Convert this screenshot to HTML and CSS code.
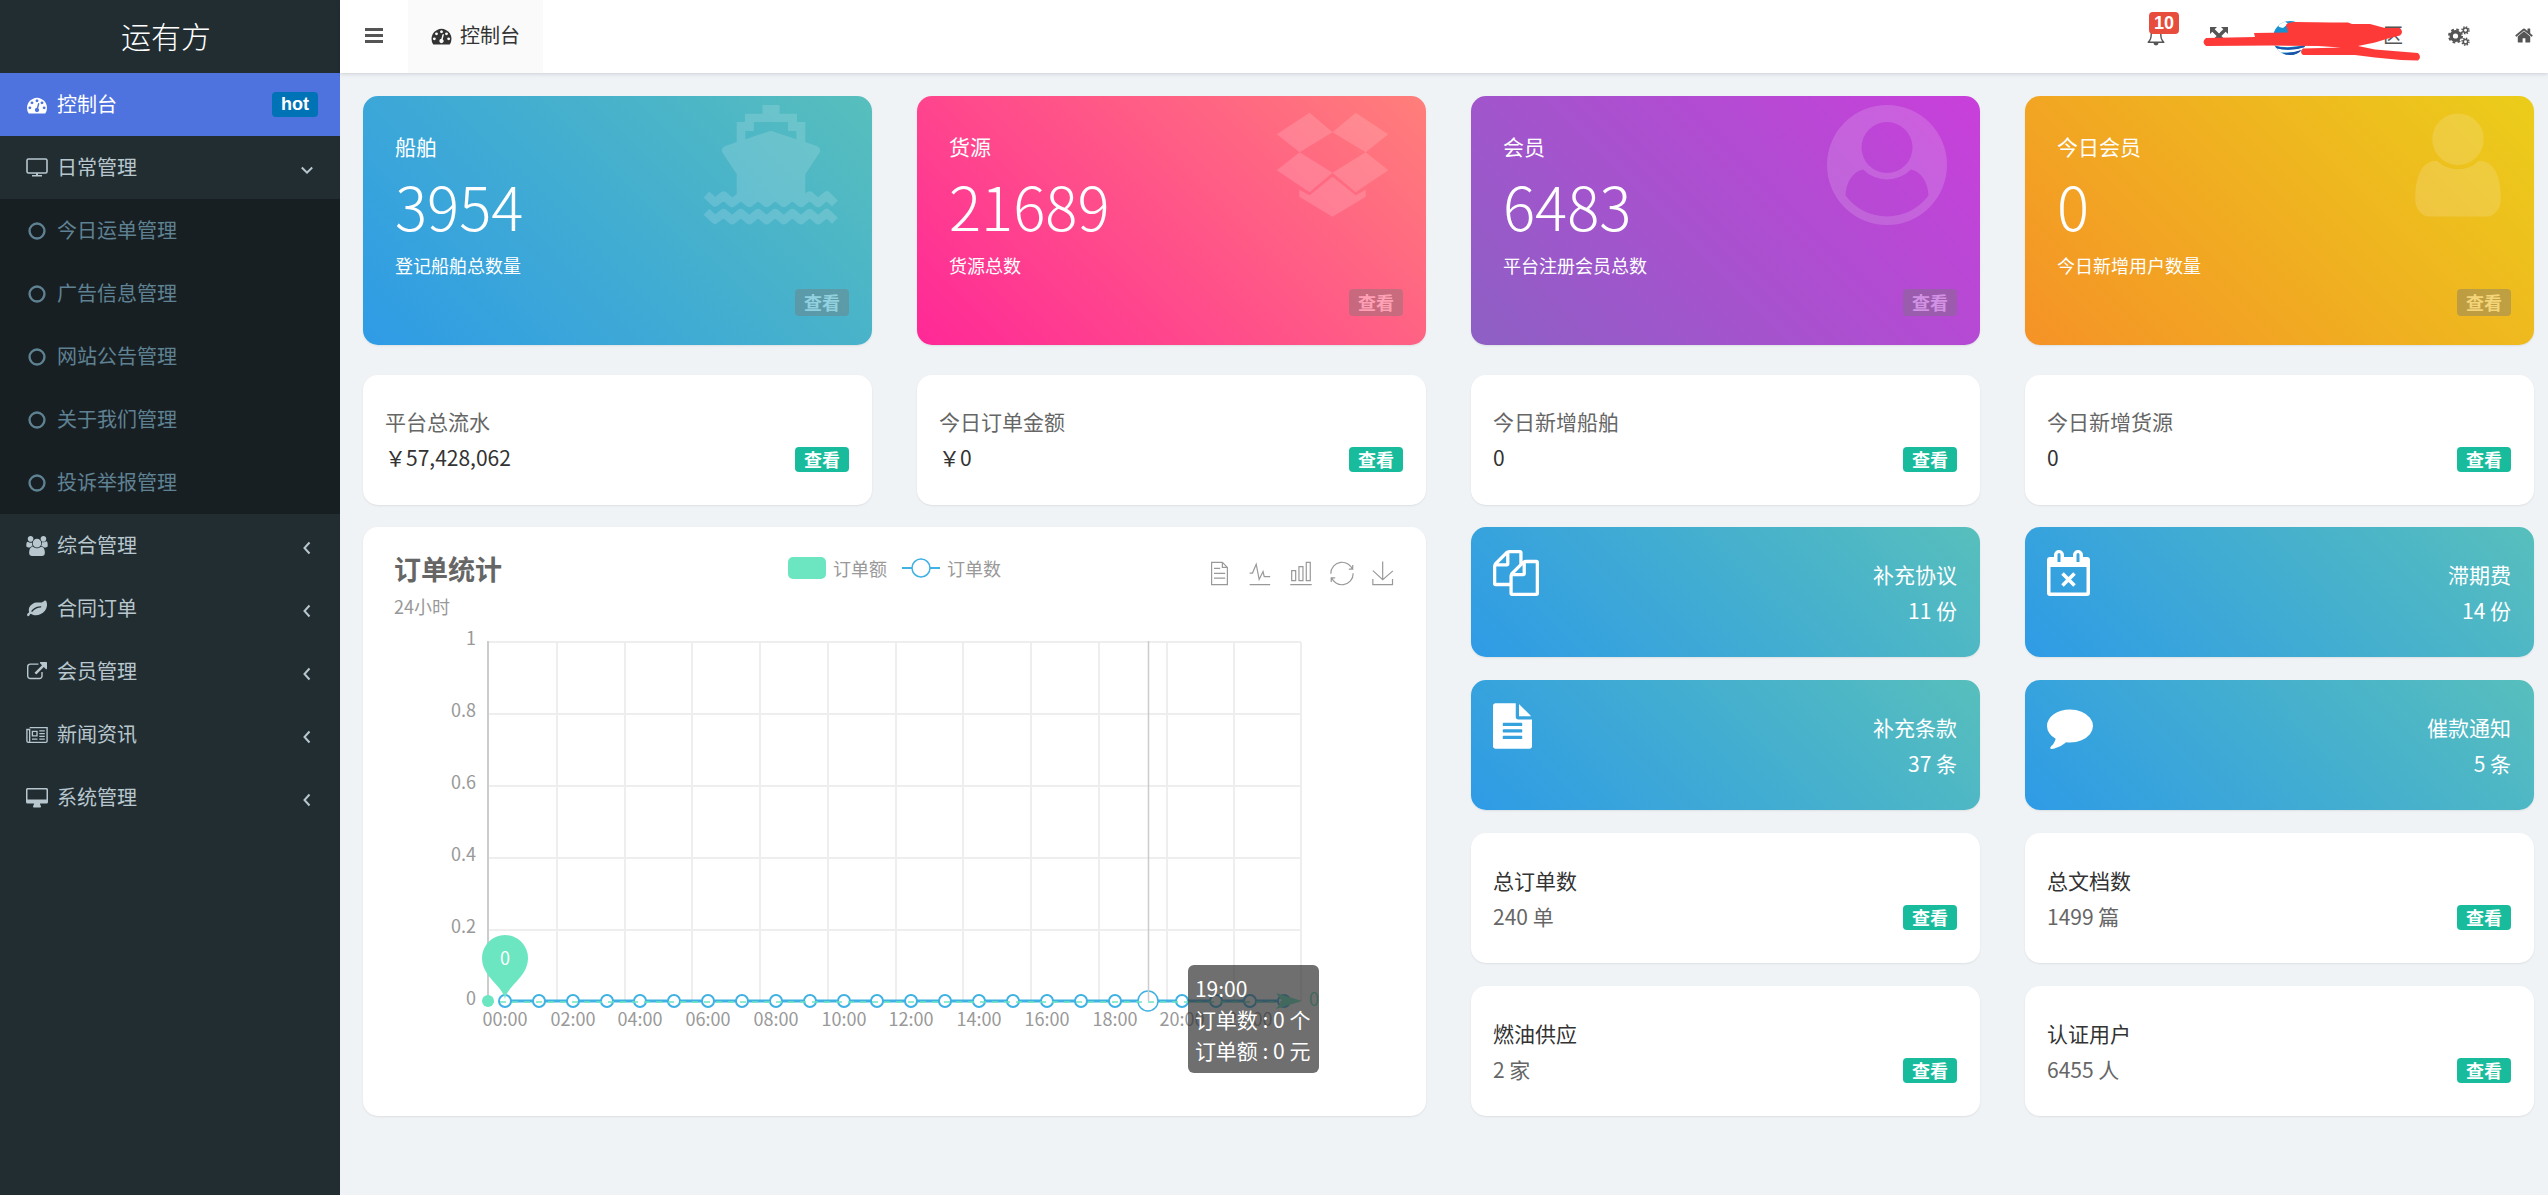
FILE: index.html
```html
<!DOCTYPE html>
<html lang="zh-CN">
<head>
<meta charset="utf-8">
<meta name="viewport" content="width=device-width, initial-scale=1">
<title>运有方</title>
<link rel="stylesheet" href="styles.css">
</head>
<body>
<svg class="sprite" aria-hidden="true">
  <symbol id="i-dashboard" viewBox="0 0 1792 1792"><path d="M384 1152q0-53-37.500-90.500t-90.500-37.500-90.500 37.500-37.500 90.500 37.500 90.500 90.500 37.500 90.500-37.500 37.500-90.500zm192-448q0-53-37.500-90.500t-90.500-37.500-90.500 37.500-37.500 90.500 37.500 90.500 90.500 37.500 90.500-37.500 37.500-90.500zm428 481l101-382q6-26-7.500-48.500t-38.500-29.500-48 6.500-30 39.500l-101 382q-60 5-107 43.500t-63 98.500q-20 77 20 146t117 89 146-20 89-117q16-60-6-117t-72-91zm660-33q0-53-37.500-90.500t-90.500-37.500-90.500 37.500-37.500 90.500 37.500 90.500 90.500 37.500 90.500-37.500 37.500-90.500zm-640-640q0-53-37.500-90.500t-90.500-37.500-90.500 37.500-37.500 90.500 37.500 90.500 90.500 37.500 90.500-37.500 37.500-90.500zm448 192q0-53-37.500-90.500t-90.500-37.500-90.500 37.500-37.500 90.500 37.500 90.500 90.500 37.500 90.500-37.500 37.500-90.500zm320 448q0 261-141 483-19 29-54 29h-1402q-35 0-54-29-141-221-141-483 0-182 71-348t191-286 286-191 348-71 348 71 286 191 191 286 71 348z"/></symbol>
  <symbol id="i-tv" viewBox="0 0 22 20"><path d="M2.500 1h17a1.500 1.500 0 0 1 1.500 1.500v11a1.500 1.500 0 0 1-1.500 1.500h-17a1.500 1.500 0 0 1-1.500-1.500v-11a1.500 1.500 0 0 1 1.500-1.500z" fill="none" stroke="currentColor" stroke-width="1.600"/><path d="M10 15h2v2h4v1.500H6V17h4z"/></symbol>
  <symbol id="i-circle" viewBox="0 0 22 22"><circle cx="11" cy="11" r="8.200" fill="none" stroke="currentColor" stroke-width="2.600"/></symbol>
  <symbol id="i-users" viewBox="0 0 1920 1792"><path d="M593 896q-162 5-265 128h-134q-82 0-138-40.500t-56-118.500q0-353 124-353 6 0 43.500 21t97.500 42.500 119 21.500q67 0 133-23-5 37-5 66 0 159 81 292zm1071 637q0 120-73 189.500t-194 69.500h-874q-121 0-194-69.500t-73-189.500q0-53 3.500-103.500t14-109 26.500-108.500 43-97.500 62-81 85.500-53.500 111.500-20q10 0 43 21.500t73 48 107 48 135 21.500 135-21.500 107-48 73-48 43-21.500q61 0 111.500 20t85.500 53.500 62 81 43 97.500 26.500 108.500 14 109 3.500 103.500zm-1024-1277q0 106-75 181t-181 75-181-75-75-181 75-181 181-75 181 75 75 181zm704 384q0 159-112.500 271.500t-271.500 112.500-271.500-112.500-112.500-271.500 112.500-271.500 271.500-112.500 271.500 112.500 112.500 271.500zm576 225q0 78-56 118.500t-138 40.500h-134q-103-123-265-128 81-133 81-292 0-29-5-66 66 23 133 23 59 0 119-21.500t97.500-42.500 43.500-21q124 0 124 353zm-128-609q0 106-75 181t-181 75-181-75-75-181 75-181 181-75 181 75 75 181z"/></symbol>
  <symbol id="i-leaf" viewBox="0 0 1792 1792"><path d="M1280 704q0-26-19-45t-45-19q-172 0-318 49.500t-259.500 134-235.500 219.500q-19 21-19 45 0 26 19 45t45 19q24 0 45-19 27-24 74-71t67-66q137-124 268.500-176t313.500-52q26 0 45-19t19-45zm512-198q0 95-20 193-46 224-184.500 383t-357.500 268q-214 108-438 108-148 0-286-47-15-5-88-42t-96-37q-16 0-39.500 32t-45 70-52.500 70-60 32q-43 0-63.500-17.500t-45.500-59.500q-2-4-6-11t-5.500-10-3-9.500-1.500-13.500q0-35 31-73.500t68-65.500 68-56 31-48q0-4-14-38t-16-44q-9-51-9-104 0-115 43.500-220t119-184.500 170.500-139 204-95.500q55-18 145-25.500t179.500-9 178.500-6 163.500-24 113.500-56.500l29.500-29.500 29.500-28 27-20 36.500-16 43.500-4.500q39 0 70.500 46t47.500 112 24 124 8 96z"/></symbol>
  <symbol id="i-external" viewBox="0 0 1792 1792"><path d="M1408 928v320q0 119-84.500 203.500t-203.500 84.500h-832q-119 0-203.500-84.500t-84.500-203.500v-832q0-119 84.500-203.500t203.500-84.500h704q14 0 23 9t9 23v64q0 14-9 23t-23 9h-704q-66 0-113 47t-47 113v832q0 66 47 113t113 47h832q66 0 113-47t47-113v-320q0-14 9-23t23-9h64q14 0 23 9t9 23zm384-864v512q0 26-19 45t-45 19-45-19l-176-176-652 652q-10 10-23 10t-23-10l-114-114q-10-10-10-23t10-23l652-652-176-176q-19-19-19-45t19-45 45-19h512q26 0 45 19t19 45z"/></symbol>
  <symbol id="i-news" viewBox="0 0 24 18"><path d="M4 1h19v14.500a1.500 1.500 0 0 1-1.500 1.500H2.500A1.500 1.500 0 0 1 1 15.500V3h3v12.500a1.500 1.500 0 0 1-1.500 1.500M7 5h5v5H7zM14.500 4.500h6M14.500 7.500h6M14.500 10.500h6M6.500 13.500h6M14.500 13.500h6" fill="none" stroke="currentColor" stroke-width="1.500"/></symbol>
  <symbol id="i-desktop" viewBox="0 0 22 20"><path fill-rule="evenodd" d="M1.500 0h19A1.500 1.500 0 0 1 22 1.500v12.500a1.500 1.500 0 0 1-1.500 1.500H14c0 1.500 1 2.200 1 3.200 0 .5-.4.8-.8.8H7.800c-.5 0-.8-.3-.8-.8 0-1 1-1.700 1-3.200H1.500A1.500 1.500 0 0 1 0 14V1.500A1.500 1.500 0 0 1 1.500 0zm.4 1.500a.4.400 0 0 0-.4.400V11.600h19V1.900a.4.400 0 0 0-.4-.4z"/></symbol>
  <symbol id="i-left" viewBox="0 0 12 14"><path d="M8.500 1.500L3.500 7l5 5.500" fill="none" stroke="currentColor" stroke-width="2"/></symbol>
  <symbol id="i-down" viewBox="0 0 12 14"><path d="M.8 4.500L6 9.700l5.200-5.200" fill="none" stroke="currentColor" stroke-width="2"/></symbol>
  <symbol id="i-bars" viewBox="0 0 18 15"><path d="M0 0h18v3H0zM0 6h18v3H0zM0 12h18v3H0z"/></symbol>
  <symbol id="i-bell" viewBox="0 0 18 20"><path d="M9 1.200V3M1.200 16.200C3.400 14.300 4.200 12 4.200 8.500 4.200 5.200 6 3 9 3s4.800 2.200 4.800 5.500c0 3.500.8 5.800 3 7.700z" fill="none" stroke="currentColor" stroke-width="1.400" stroke-linejoin="round"/><path d="M6.500 17h5a2.500 2.500 0 0 1-5 0z"/></symbol>
  <symbol id="i-expand" viewBox="0 0 18 18"><path d="M0 0h7L4.700 2.300 9 6.600l4.300-4.300L11 0h7v7l-2.300-2.300L11.400 9l4.300 4.300L18 11v7h-7l2.300-2.300L9 11.400l-4.300 4.300L7 18H0v-7l2.300 2.300L6.600 9 2.300 4.700 0 7z"/></symbol>
  <symbol id="i-cogs" viewBox="0 0 22 20"><g fill="none" stroke="currentColor"><circle cx="7.500" cy="10" r="4.300" stroke-width="3.400"/><circle cx="7.500" cy="10" r="6.500" stroke-width="2" stroke-dasharray="2.700 2.400"/><circle cx="17.500" cy="4.300" r="2.200" stroke-width="1.500"/><circle cx="17.500" cy="4.300" r="3.500" stroke-width="1.400" stroke-dasharray="1.400 1.350"/><circle cx="17.500" cy="15.700" r="2.200" stroke-width="1.500"/><circle cx="17.500" cy="15.700" r="3.500" stroke-width="1.400" stroke-dasharray="1.400 1.350"/></g></symbol>
  <symbol id="i-home" viewBox="64 256 1664 1280"><path d="M1472 992v480q0 26-19 45t-45 19h-384v-384h-256v384h-384q-26 0-45-19t-19-45v-480q0-1 .5-3t.5-3l575-474 575 474q1 2 1 6zm223-69l-62 74q-8 9-21 11h-3q-13 0-21-7l-692-577-692 577q-12 8-24 7-13-2-21-11l-62-74q-8-10-7-23.500t11-21.500l719-599q32-26 76-26t76 26l244 204v-195q0-14 9-23t23-9h192q14 0 23 9t9 23v408l219 182q10 8 11 21.500t-7 23.500z"/></symbol>
  <symbol id="i-files" viewBox="0 0 1792 1792"><path d="M1696 384q40 0 68 28t28 68v1216q0 40-28 68t-68 28h-960q-40 0-68-28t-28-68v-288h-544q-40 0-68-28t-28-68v-672q0-40 20-88t48-76l408-408q28-28 76-48t88-20h416q40 0 68 28t28 68v328q68-40 128-40h416zm-544 213l-299 299h299v-299zm-640-384l-299 299h299v-299zm196 647l316-316v-416h-384v416q0 40-28 68t-68 28h-416v640h512v-256q0-40 20-88t48-76zm956 804v-1152h-384v416q0 40-28 68t-68 28h-416v640h896z"/></symbol>
  <symbol id="i-calendar" viewBox="0 0 43 46"><path fill-rule="evenodd" d="M3 7h4V5a5 5 0 0 1 10 0v2h9V5a5 5 0 0 1 10 0v2h4a3 3 0 0 1 3 3v33a3 3 0 0 1-3 3H3a3 3 0 0 1-3-3V10a3 3 0 0 1 3-3zm.500 10v25.500h36V17zM10.500 4.500v7.500h3V4.500a1.500 1.500 0 0 0-3 0zm19 0v7.500h3V4.500a1.500 1.500 0 0 0-3 0z"/><path d="M15.500 23.500l12 12m0-12l-12 12" stroke="currentColor" stroke-width="3.600"/></symbol>
  <symbol id="i-filetext" viewBox="128 0 1536 1792"><path d="M1596 476q14 14 28 36h-472v-472q22 14 36 28zm-476 164h544v1056q0 40-28 68t-68 28h-1344q-40 0-68-28t-28-68v-1600q0-40 28-68t68-28h800v544q0 40 28 68t68 28zm160 736v-64q0-14-9-23t-23-9h-704q-14 0-23 9t-9 23v64q0 14 9 23t23 9h704q14 0 23-9t9-23zm0-256v-64q0-14-9-23t-23-9h-704q-14 0-23 9t-9 23v64q0 14 9 23t23 9h704q14 0 23-9t9-23zm0-256v-64q0-14-9-23t-23-9h-704q-14 0-23 9t-9 23v64q0 14 9 23t23 9h704q14 0 23-9t9-23z"/></symbol>
  <symbol id="i-comment" viewBox="0 0 1792 1792"><path d="M1792 896q0 174-120 321.500t-326 233-450 85.500q-70 0-145-8-198 175-460 242-49 14-114 22-17 2-30.500-9t-17.500-29v-1q-3-4-.5-12t2-10 4.500-9.500l6-9 7-8.500 8-9q7-8 31-34.500t34.500-38 31-39.500 32.500-51 27-59 26-76q-157-89-247.500-220t-90.500-281q0-130 71-248.500t191-204.500 286-136.500 348-50.500q244 0 450 85.500t326 233 120 321.500z"/></symbol>
</svg>

<div class="app">
  <aside class="sidebar">
    <a class="brand" href="#">运有方</a>
    <nav>
      <ul class="menu">
        <li><a class="item active" href="#"><svg class="ico"><use href="#i-dashboard"/></svg><span class="label">控制台</span><span class="hot">hot</span></a></li>
        <li><a class="item" href="#"><svg class="ico"><use href="#i-tv"/></svg><span class="label">日常管理</span><svg class="arrow"><use href="#i-down"/></svg></a>
          <ul class="submenu">
            <li><a class="item" href="#"><svg class="ico"><use href="#i-circle"/></svg><span class="label">今日运单管理</span></a></li>
            <li><a class="item" href="#"><svg class="ico"><use href="#i-circle"/></svg><span class="label">广告信息管理</span></a></li>
            <li><a class="item" href="#"><svg class="ico"><use href="#i-circle"/></svg><span class="label">网站公告管理</span></a></li>
            <li><a class="item" href="#"><svg class="ico"><use href="#i-circle"/></svg><span class="label">关于我们管理</span></a></li>
            <li><a class="item" href="#"><svg class="ico"><use href="#i-circle"/></svg><span class="label">投诉举报管理</span></a></li>
          </ul>
        </li>
        <li><a class="item" href="#"><svg class="ico"><use href="#i-users"/></svg><span class="label">综合管理</span><svg class="arrow"><use href="#i-left"/></svg></a></li>
        <li><a class="item" href="#"><svg class="ico"><use href="#i-leaf"/></svg><span class="label">合同订单</span><svg class="arrow"><use href="#i-left"/></svg></a></li>
        <li><a class="item" href="#"><svg class="ico"><use href="#i-external"/></svg><span class="label">会员管理</span><svg class="arrow"><use href="#i-left"/></svg></a></li>
        <li><a class="item" href="#"><svg class="ico"><use href="#i-news"/></svg><span class="label">新闻资讯</span><svg class="arrow"><use href="#i-left"/></svg></a></li>
        <li><a class="item" href="#"><svg class="ico"><use href="#i-desktop"/></svg><span class="label">系统管理</span><svg class="arrow"><use href="#i-left"/></svg></a></li>
      </ul>
    </nav>
  </aside>

  <div class="page">
    <header class="topbar">
      <button class="toggle" type="button" aria-label="菜单"><svg><use href="#i-bars"/></svg></button>
      <a class="tab" href="#"><svg><use href="#i-dashboard"/></svg><span class="label">控制台</span></a>
      <div class="tools">
        <a class="bell" href="#" aria-label="通知"><svg class="t-bell"><use href="#i-bell"/></svg><span class="count">10</span></a>
        <a href="#" aria-label="全屏"><svg class="t-expand"><use href="#i-expand"/></svg></a>
        <a class="user" href="#">
          <svg class="avatar" viewBox="0 0 34 34"><defs><clipPath id="av"><circle cx="17" cy="17" r="17"/></clipPath></defs><g clip-path="url(#av)"><path fill="#1590d0" d="M0 0h34v34H0z"/><path fill="#fff" d="M4 2l8-2 3 3-5 4-4-1zM0 20q12 6 34 0v3q-18 6-34 1zM2 27q14 4 30-1v2q-12 5-28 3z"/><path fill="#1d52a6" d="M1 25q14 4 32-1l-1 2q-14 5-30 1zM6 32q12 1 22-3l-3 5H9z"/></g></svg>
          <span class="label">区</span>
          <svg class="scribble" viewBox="0 0 220 42"><path d="M4 18L53 17 52 13 86 12.500 84 5Q86 2 93 2L129 2.500H146L150 4H168L183 8 198 8Q202 12 198 15.500L186 18.500 173 22.500 156 26 173 29.500 216 33Q220 37 216 40.500L199 40 173 37.500 153 35H101Q97 32 101 28.500L139 27.500 116 26 69 25.500 4 26Q-1 22 4 18z"/></svg>
        </a>
        <a href="#" aria-label="设置"><svg class="t-cogs"><use href="#i-cogs"/></svg></a>
        <a href="#" aria-label="主页"><svg class="t-home"><use href="#i-home"/></svg></a>
      </div>
    </header>

    <main class="content">
      <section class="grid stats">
        <article class="card stat blue">
          <div class="stat-text"><h2>船舶</h2><strong>3954</strong><p>登记船舶总数量</p></div>
          <div class="stat-side">
            <svg class="big" width="137" height="120" viewBox="0 0 137 120"><path fill-rule="evenodd" d="M60.400 0h17.200v8.700h17.500V17h8.200v20l12 4.200q4 2 2.500 6L103.300 69.300V92H34.700V69.300L20.200 47.200q-1.500-4 2.500-6l12-4.200V17h8.200V8.700h17.500zM51.900 17v9h-8.600v8.300L69 25.700l25.400 8.600V26H86v-9z"/><path d="M4.500 89.500L13 97.500 21.600 90.500 30.200 98 38.800 91 47.400 98 56 91 64.600 98 73.200 91 81.800 98 90.400 91 99 98 107.600 90.500 116.200 98 124.800 90.500 133 98.500M4.500 106.800L13 114.800 21.600 108 30.200 115.200 38.800 108 47.400 115.200 56 108 64.600 115.200 73.200 108 81.800 115.200 90.400 108 99 115.200 107.600 108 116.200 115.200 124.800 108 133 115.800" fill="none" stroke="#fff" stroke-width="8.400" stroke-linejoin="round"/></svg>
            <a class="btn ghost" href="#">查看</a>
          </div>
        </article>
        <article class="card stat pink">
          <div class="stat-text"><h2>货源</h2><strong>21689</strong><p>货源总数</p></div>
          <div class="stat-side">
            <svg class="big" width="120" height="120" viewBox="0 0 120 120"><path d="M36.600 7.700L3.800 29.300l22.800 18 32.900-20zM82.700 7.700l32.500 21.600-22.500 18-33.200-20zM26.600 47.300l32.900 20.400-22.900 19.600-32.800-22zM92.700 47.300l22.500 18-32.500 22-23.200-19.600zM26.300 84.700l10.300 5.600 22.900-18.600 23.200 18.600 10-5.600v7l-33.200 20-33.200-20z"/></svg>
            <a class="btn ghost" href="#">查看</a>
          </div>
        </article>
        <article class="card stat purple">
          <div class="stat-text"><h2>会员</h2><strong>6483</strong><p>平台注册会员总数</p></div>
          <div class="stat-side">
            <svg class="big" width="120" height="120" viewBox="0 0 120 120"><path fill-rule="evenodd" d="M60 0a60 60 0 1 1 0 120A60 60 0 0 1 60 0zm0 17a25.500 25.500 0 1 0 0 51 25.500 25.500 0 0 0 0-51zM36 64.500C25 67 19 78 18.500 90.500a51.500 51.500 0 0 0 83 0C101 78 95 67 84 64.500a34 34 0 0 1-48 0z"/></svg>
            <a class="btn ghost" href="#">查看</a>
          </div>
        </article>
        <article class="card stat yellow">
          <div class="stat-text"><h2>今日会员</h2><strong>0</strong><p>今日新增用户数量</p></div>
          <div class="stat-side">
            <svg class="big" width="86" height="120" viewBox="256 0 1280 1792"><path d="M1536 1399q0 109-62.500 187t-150.500 78h-854q-88 0-150.500-78t-62.500-187q0-85 8.500-160.500t31.500-152 58.500-131 94-89 134.500-34.500q131 128 313 128t313-128q76 0 134.500 34.500t94 89 58.500 131 31.500 152 8.500 160.500zm-256-887q0 159-112.500 271.500t-271.500 112.500-271.500-112.500-112.500-271.500 112.500-271.500 271.500-112.500 271.500 112.500 112.500 271.500z"/></svg>
            <a class="btn ghost" href="#">查看</a>
          </div>
        </article>
      </section>

      <section class="grid totals">
        <article class="card info light"><div><h3>平台总流水</h3><p>￥57,428,062</p></div><a class="btn" href="#">查看</a></article>
        <article class="card info light"><div><h3>今日订单金额</h3><p>￥0</p></div><a class="btn" href="#">查看</a></article>
        <article class="card info light"><div><h3>今日新增船舶</h3><p>0</p></div><a class="btn" href="#">查看</a></article>
        <article class="card info light"><div><h3>今日新增货源</h3><p>0</p></div><a class="btn" href="#">查看</a></article>
      </section>

      <section class="grid lower">
        <article class="card chart">
          <div class="chart-head">
            <div class="chart-title"><h2>订单统计</h2><p>24小时</p></div>
            <ul class="legend">
              <li><span class="swatch"></span>订单额</li>
              <li><svg width="38" height="20" viewBox="0 0 38 20"><path d="M0 10h38" stroke="#3fb1e3" stroke-width="2"/><circle cx="19" cy="10" r="9" fill="#fff" stroke="#3fb1e3" stroke-width="1.500"/></svg>订单数</li>
            </ul>
            <div class="toolbox">
              <button type="button" aria-label="数据视图"><svg viewBox="0 0 60 60"><path d="M17.500 17.300H33M45.400 29.500h-28M11.500 2v56H51V14.800L38.400 2H11.500zM38.400 2.200v12.700H51M45.400 41.700h-28"/></svg></button>
              <button type="button" aria-label="折线图"><svg viewBox="0 0 60 60"><path d="M4.100 28.900h7.100l9.300-22 7.400 38 9.700-19.700 3 12.800h14.900M4.100 58h51.400"/></svg></button>
              <button type="button" aria-label="柱状图"><svg viewBox="0 0 60 60"><path d="M6.700 22.900h10V48h-10zM24.900 13h10v35h-10zM43.200 2h10v46h-10zM3.100 58h53.700"/></svg></button>
              <button type="button" aria-label="还原"><svg viewBox="0 0 60 60"><path d="M47 18.900h9.800V8.700M56.300 20.100C52.100 9 40.500.6 26.800 2.100 12.600 3.700 1.600 16.200 2.100 30.600M13 41.100H3.100v10.200M3.700 39.900c4.200 11.100 15.800 19.500 29.500 18 14.200-1.600 25.200-14.100 24.700-28.500"/></svg></button>
              <button type="button" aria-label="保存"><svg viewBox="0 0 60 60"><path d="M4.700 22.900l24.600 22.600 25.400-22.100M4.600 43.600V58h49.200V43.600M29.200 45.100V0"/></svg></button>
            </div>
          </div>
          <div class="plot">
            <svg viewBox="0 0 1063 460" role="img" aria-label="订单统计">
              <defs>
                <marker id="dot" markerUnits="userSpaceOnUse" markerWidth="16" markerHeight="16" refX="8" refY="8"><circle cx="8" cy="8" r="6" fill="#fff" stroke="#3fb1e3" stroke-width="2"/></marker>
              </defs>
              <path stroke="#eee" stroke-width="2" fill="none" d="M125 22h813M125 94h813M125 166h813M125 238h813M125 310h813M194 22v359M262 22v359M329 22v359M397 22v359M465 22v359M533 22v359M600 22v359M668 22v359M736 22v359M804 22v359M871 22v359M938 22v359"/>
              <path stroke="#ccc" stroke-width="2" fill="none" d="M125 21v360"/>
              <g class="axis" text-anchor="end"><text x="113" y="25">1</text><text x="113" y="97">0.8</text><text x="113" y="169">0.6</text><text x="113" y="241">0.4</text><text x="113" y="313">0.2</text><text x="113" y="385">0</text></g>
              <g class="axis" text-anchor="middle"><text x="142" y="406">00:00</text><text x="210" y="406">02:00</text><text x="277" y="406">04:00</text><text x="345" y="406">06:00</text><text x="413" y="406">08:00</text><text x="481" y="406">10:00</text><text x="548" y="406">12:00</text><text x="616" y="406">14:00</text><text x="684" y="406">16:00</text><text x="752" y="406">18:00</text><text x="819" y="406">20:00</text><text x="887" y="406">22:00</text></g>
              <path fill="none" stroke="#3fb1e3" stroke-width="3" marker-start="url(#dot)" marker-mid="url(#dot)" marker-end="url(#dot)" d="M142 381L176 381 210 381 244 381 277 381 311 381 345 381 379 381 413 381 447 381 481 381 514 381 548 381 582 381 616 381 650 381 684 381 718 381 752 381 785 381 819 381 853 381 887 381 921 381"/>
              <circle cx="785" cy="381" r="10" fill="#fff" stroke="#3fb1e3" stroke-width="1.500"/>
              <path d="M785.500 21v360" stroke="#ccc" stroke-width="1.500"/>
              <path d="M125 382h800" stroke="#6be6c1" stroke-width="1.500" stroke-dasharray="6 6"/>
              <circle cx="125" cy="381" r="6" fill="#6be6c1"/>
              <path fill="#6be6c1" d="M939 381l-26-8 6 8-6 8z"/>
              <text class="mark" x="946" y="386">0</text>
              <path fill="#6be6c1" d="M142 379C140 366 119 357 119 338a23 23 0 0 1 46 0C165 357 144 366 142 379z"/>
              <text class="pin" x="142" y="345" text-anchor="middle">0</text>
            </svg>
            <div class="tooltip"><span>19:00</span><span>订单数 : 0 个</span><span>订单额 : 0 元</span></div>
          </div>
        </article>

        <article class="card info blue"><svg class="kind" width="46" height="46"><use href="#i-files"/></svg><div class="end"><h3>补充协议</h3><p>11 份</p></div></article>
        <article class="card info blue"><svg class="kind" width="43" height="46"><use href="#i-calendar"/></svg><div class="end"><h3>滞期费</h3><p>14 份</p></div></article>
        <article class="card info blue"><svg class="kind" width="39" height="46"><use href="#i-filetext"/></svg><div class="end"><h3>补充条款</h3><p>37 条</p></div></article>
        <article class="card info blue"><svg class="kind" width="46" height="46"><use href="#i-comment"/></svg><div class="end"><h3>催款通知</h3><p>5 条</p></div></article>
        <article class="card info"><div><h3>总订单数</h3><p>240 单</p></div><a class="btn" href="#">查看</a></article>
        <article class="card info"><div><h3>总文档数</h3><p>1499 篇</p></div><a class="btn" href="#">查看</a></article>
        <article class="card info"><div><h3>燃油供应</h3><p>2 家</p></div><a class="btn" href="#">查看</a></article>
        <article class="card info"><div><h3>认证用户</h3><p>6455 人</p></div><a class="btn" href="#">查看</a></article>
      </section>
    </main>
  </div>
</div>
</body>
</html>
```
FILE: styles.css
```css
* { box-sizing: border-box; }
body {
  margin: 0;
  background: #f0f3f6;
  color: #333;
  font-family: "Noto Sans CJK SC", "Noto Sans", sans-serif;
  font-size: 21px;
  font-weight: 400;
}
h2, h3, p, ul { margin: 0; padding: 0; font-weight: inherit; font-size: inherit; }
ul { list-style: none; }
a { color: inherit; text-decoration: none; }
button { border: 0; padding: 0; background: none; color: inherit; cursor: pointer; }
svg { display: block; fill: currentColor; flex: none; }
.sprite { position: absolute; width: 0; height: 0; }
.label { padding-bottom: 3px; }

/* Sidebar */
.app { display: flex; min-height: 100vh; }
.sidebar { flex: none; width: 340px; background: #222d32; color: #b8c7ce; }
.brand {
  display: flex; align-items: center; justify-content: center;
  height: 73px; padding: 0 8px 4px 0;
  color: #fff; font-size: 30px; font-weight: 300;
}
.item {
  display: flex; align-items: center; gap: 9px;
  height: 63px; padding: 0 22px 0 26px;
  font-size: 20px;
}
.item.active { background: #4e73df; color: #fff; }
.ico { width: 22px; height: 20px; }
.arrow { width: 12px; height: 14px; margin: 5px 5px 0 auto; }
.hot {
  margin-left: auto; padding: 0 9px;
  border-radius: 4px; background: #0073b7;
  font: bold 18px/25px "Liberation Sans", Arial, sans-serif;
}
.submenu { background: #181f23; color: #5f8293; }

/* Top bar */
.page { flex: 1; min-width: 0; }
.topbar {
  display: flex; height: 73px;
  background: #fff; color: #555;
  box-shadow: 0 1px 4px rgba(0, 21, 41, .16);
}
.toggle { width: 68px; padding: 0 7px 2px 25px; }
.toggle svg { width: 18px; height: 15px; }
.tab {
  display: flex; align-items: center; gap: 8px;
  padding: 0 23px 2px; background: #fafafa; color: #333; font-size: 20px;
}
.tab svg { width: 21px; height: 20px; }
.tools { display: flex; align-items: center; gap: 45px; margin-left: auto; padding: 0 15px 2px 0; }
.bell { position: relative; }
.t-bell { width: 18px; height: 20px; }
.count {
  position: absolute; left: 2px; top: -14px; padding: 0 5px;
  border-radius: 4px; background: #e74c3c; color: #fff;
  font: bold 18px/22px "Liberation Sans", Arial, sans-serif;
}
.t-expand { width: 18px; height: 18px; }
.t-cogs { width: 22px; height: 20px; }
.t-home { width: 18px; height: 15px; }
.user {
  position: relative; display: flex; align-items: center; justify-content: space-between;
  width: 130px; height: 34px; font-size: 20px;
}
.avatar { width: 34px; height: 34px; margin-top: 4px; }
.scribble { position: absolute; left: -71px; top: 1px; width: 220px; height: 42px; fill: #fe3a38; }

/* Cards */
.content { padding: 23px 14px 79px 23px; }
.grid { display: grid; grid-template-columns: repeat(4, minmax(0, 1fr)); column-gap: 45px; }
.card { border-radius: 15px; background: #fff; box-shadow: 0 1px 2px rgba(0, 0, 0, .08); }
.card.blue { background: linear-gradient(45deg, #2e9be6, #57bfbc); color: #fff; }
.card.pink { background: linear-gradient(45deg, #ff2897, #ff7f7a); color: #fff; }
.card.purple { background: linear-gradient(45deg, #8d60c4, #c93fdb); color: #fff; }
.card.yellow { background: linear-gradient(45deg, #f59227, #ebcd1a); color: #fff; }
.btn {
  display: block; padding: 0 9px;
  border-radius: 4px; background: #18bc9c; color: #fff;
  font-size: 18px; line-height: 25px; font-weight: 700;
}

.stat { display: flex; justify-content: space-between; }
.stat-text { padding: 35px 0 68px 32px; }
.stat-text h2 { line-height: 30px; }
.stat-text strong { display: block; margin: 8px 0 12px; font-size: 60px; line-height: 72px; font-weight: 300; }
.stat-text p { font-size: 18px; line-height: 24px; }
.stat-side {
  display: flex; flex-direction: column; justify-content: space-between; align-items: flex-end;
  padding: 9px 23px 29px 0;
}
.big { margin-right: 10px; fill: #fff; opacity: .15; }
.ghost { background: #777; line-height: 27px; opacity: .4; }

.totals { margin-top: 30px; }
.info {
  display: flex; justify-content: space-between; align-items: flex-start;
  min-height: 130px; padding: 29px 23px 27px 22px; line-height: 36px;
}
.info p { color: #666; }
.info.light { padding-top: 28px; }
.info.light h3 { color: #666; }
.info.light p { color: #333; }
.info.blue p { color: inherit; }
.info .btn { margin-top: 43px; }
.info.light .btn { margin-top: 44px; }
.kind { margin-top: -6px; }
.end { text-align: right; }

.lower { margin-top: 22px; row-gap: 23px; }

/* Chart */
.chart { grid-column: 1 / 3; grid-row: 1 / 5; }
.chart-head { display: grid; grid-template-columns: 1fr auto 1fr; padding: 21px 31px 0; height: 93px; }
.chart-title h2 { color: #666; font-size: 27px; line-height: 42px; font-weight: 700; }
.chart-title p { color: #999; font-size: 18px; line-height: 32px; }
.legend { display: flex; gap: 15px; color: #999; font-size: 18px; line-height: 40px; }
.legend li { display: flex; align-items: center; gap: 7px; height: 40px; }
.swatch { width: 38px; height: 22px; border-radius: 5px; background: #6be6c1; }
.toolbox { display: flex; gap: 17px; justify-content: flex-end; align-items: flex-start; padding-top: 13px; }
.toolbox svg { width: 24px; height: 25px; fill: none; stroke: #999; stroke-width: 3; }
.plot { position: relative; }
.plot > svg { width: 100%; height: auto; }
.plot text { font-size: 18px; }
.axis { fill: #999; }
.mark { fill: #6be6c1; }
.pin { fill: #fff; }
.tooltip {
  position: absolute; left: 77.6%; top: 75%;
  display: flex; flex-direction: column;
  padding: 8px 9px 7px 7px; border-radius: 6px;
  background: rgba(50, 50, 50, .7); color: #fff;
  line-height: 31px; white-space: nowrap;
}
```
